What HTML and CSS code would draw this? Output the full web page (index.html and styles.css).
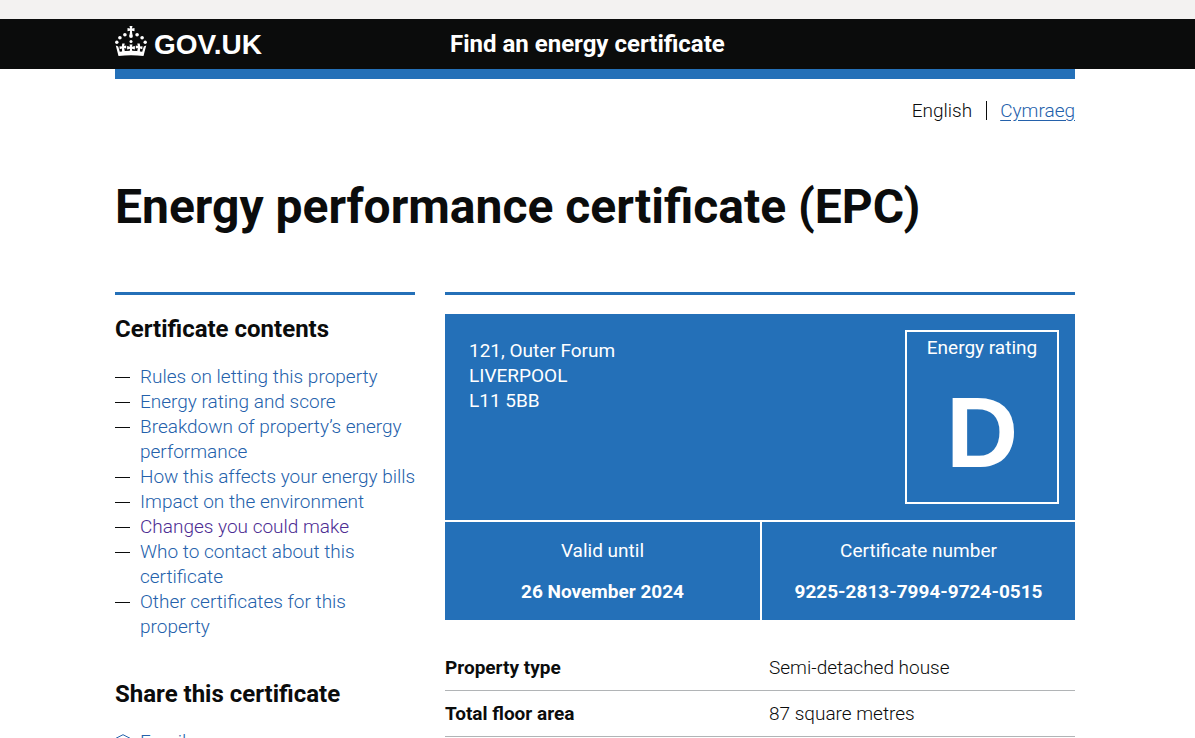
FILE: index.html
```html
<!DOCTYPE html>
<html lang="en">
	<head>
		<meta charset="UTF-8">
		<title>Energy performance certificate (EPC)</title>
		<link rel="stylesheet" href="styles.css">
	</head>
	<body>
		<div class="top-strip"></div>
		<header class="header">
			<div class="container header-row">
				<a class="logo" href="#">
					<svg class="crown" viewBox="0 0 32 30" width="32" height="30" aria-hidden="true" fill="#fff">
						<path d="M14.500 0h3l-.6 2.600 2.600-.6v3.200l-2.600-.5.5 4h-2.800l.5-4-2.600.5V2l2.600.6z"/>
						<circle cx="16" cy="10" r="1.900"/>
						<circle cx="9.900" cy="8.700" r="1.800"/><circle cx="22.100" cy="8.700" r="1.800"/>
						<circle cx="4.900" cy="11.700" r="1.800"/><circle cx="27.100" cy="11.700" r="1.800"/>
						<circle cx="1.800" cy="16.300" r="1.700"/><circle cx="30.200" cy="16.300" r="1.700"/>
						<circle cx="16" cy="15.600" r="1.500"/>
						<!-- base band and the two ends -->
						<path d="M3.500 30L.8 19.500l2.400 1 1.600 5.300q11.200-2 22.400 0l1.600-5.300 2.400-1L28.500 30q-12.500-1.500-25 0z"/>
						<!-- crosses -->
						<path d="M14.500 18.500h3l-.6 2.300 3-.7v3.400l-3-.7.6 3.500h-3l.6-3.500-3 .7v-3.400l3 .7z"/>
						<path d="M7.300 17.500l2.400 0-.5 2.600 2-.5v3l-2-.5.8 4.500-2.800.4-.3-4.500-2.200.7-.2-3 2.300.2z"/>
						<path d="M24.700 17.500l-2.400 0 .5 2.600-2-.5v3l2-.5-.8 4.500 2.800.4.3-4.500 2.200.7.2-3-2.300.2z"/>
					</svg>
					<span>GOV.UK</span>
				</a>
				<a class="service" href="#">Find an energy certificate</a>
			</div>
		</header>
		<div class="container">
			<div class="blue-bar"></div>
			<nav class="language">
				<span>English</span>
				<a href="#">Cymraeg</a>
			</nav>
			<h1>Energy performance certificate (EPC)</h1>
			<div class="columns">
				<aside class="sidebar">
					<h2>Certificate contents</h2>
					<ul class="contents">
						<li><a href="#">Rules on letting this property</a></li>
						<li><a href="#">Energy rating and score</a></li>
						<li><a href="#">Breakdown of property’s energy performance</a></li>
						<li><a href="#">How this affects your energy bills</a></li>
						<li><a href="#">Impact on the environment</a></li>
						<li><a class="visited" href="#">Changes you could make</a></li>
						<li><a href="#">Who to contact about this certificate</a></li>
						<li><a href="#">Other certificates for this property</a></li>
					</ul>
					<h2>Share this certificate</h2>
					<a class="share" href="#">
						<svg width="16" height="16" viewBox="0 0 16 16" fill="none" stroke="#2461ab" aria-hidden="true">
							<path d="M.5 4.500L8 .7l7.500 3.800v11H.5zM.5 5L8 10l7.500-5"/>
						</svg>
						<span>Email</span>
					</a>
				</aside>
				<main class="main">
					<div class="epc">
						<div class="epc-top">
							<p class="address">121, Outer Forum<br>LIVERPOOL<br>L11 5BB</p>
							<div class="rating">
								<p>Energy rating</p>
								<p class="letter">D</p>
							</div>
						</div>
						<div class="epc-bottom">
							<div class="epc-cell">
								<p>Valid until</p>
								<p><b>26 November 2024</b></p>
							</div>
							<div class="epc-cell">
								<p>Certificate number</p>
								<p><b>9225-2813-7994-9724-0515</b></p>
							</div>
						</div>
					</div>
					<table class="summary">
						<tr><th scope="row">Property type</th><td>Semi-detached house</td></tr>
						<tr><th scope="row">Total floor area</th><td>87 square metres</td></tr>
					</table>
				</main>
			</div>
		</div>
	</body>
</html>
```

FILE: styles.css
```css
*{
	box-sizing: border-box;
}
html{
	overflow: hidden;
}
body{
	margin: 0;
	font-family: Roboto, "Liberation Sans", sans-serif;
	font-size: 19px;
	font-weight: 300;
	line-height: 25px;
	color: #0b0c0c;
	background: #fff;
}
p, h1, h2, ul{
	margin: 0;
	padding: 0;
}
b{
	font-weight: bold;
}
a{
	color: #2461ab;
	text-decoration: none;
}
.container{
	margin: 0 120px 0 115px;
}
.top-strip{
	height: 19px;
	background: #f3f2f1;
}
.header{
	background: #0b0c0c;
}
.header-row{
	display: grid;
	grid-template-columns: 335px 1fr;
	align-items: center;
	height: 50px;
}
.header a{
	color: #fff;
	font-weight: bold;
}
.logo{
	display: flex;
	align-items: center;
	gap: 7px;
	font-family: "Liberation Sans", sans-serif;
	font-size: 28px;
}
.crown{
	margin-bottom: 6px;
}
.service{
	font-size: 24px;
}
.blue-bar{
	height: 10px;
	background: #2470b8;
}
.language{
	display: flex;
	justify-content: flex-end;
	align-items: center;
	padding-top: 19px;
}
.language span{
	line-height: 19px;
	padding-right: 14px;
	border-right: 1px solid #0b0c0c;
	margin-right: 13px;
}
.language a{
	text-decoration: underline;
	text-underline-offset: 3px;
}
h1{
	margin: 59px 0 60px;
	font-size: 48px;
	line-height: 50px;
}
.columns{
	display: grid;
	grid-template-columns: 300px 1fr;
	gap: 30px;
}
.sidebar, .main{
	border-top: 3px solid #2470b8;
}
h2{
	margin: 19px 0 20px;
	font-size: 24px;
	line-height: 30px;
}
/* long links may run a little into the column gap */
.contents{
	list-style: none;
	margin: 0 -4px 40px 0;
}
.contents li{
	display: flex;
}
/* dash in front of each link */
.contents li::before{
	content: "";
	flex: none;
	width: 15px;
	height: 1px;
	margin: 13px 10px 0 0;
	background: #0b0c0c;
}
.contents .visited{
	color: #4c2c92;
}
.share{
	display: flex;
	align-items: center;
	gap: 9px;
}
.epc{
	margin-top: 19px;
	color: #fff;
}
.epc-top{
	display: flex;
	justify-content: space-between;
	align-items: flex-start;
	height: 206px;
	padding: 16px;
	background: #2470b8;
}
.epc p{
	font-weight: 400;
}
.address{
	padding: 8px;
}
.rating{
	width: 154px;
	height: 174px;
	padding-top: 3px;
	border: 2px solid #fff;
	text-align: center;
}
.epc .letter{
	margin-top: 22px;
	font-family: "Liberation Sans", sans-serif;
	font-size: 100px;
	line-height: 100px;
	font-weight: bold;
}
.epc-bottom{
	display: grid;
	grid-template-columns: 1fr 1fr;
	margin-top: 2px;
	text-align: center;
}
.epc-cell{
	display: grid;
	gap: 16px;
	padding: 16px 0;
	background: #2470b8;
}
.epc-cell + .epc-cell{
	border-left: 2px solid #fff;
}
.summary{
	width: 100%;
	margin-top: 25px;
	border-collapse: collapse;
	text-align: left;
}
.summary th, .summary td{
	padding: 10px 0;
	border-bottom: 1px solid #b1b4b6;
}
.summary th{
	width: 324px;
}
```
